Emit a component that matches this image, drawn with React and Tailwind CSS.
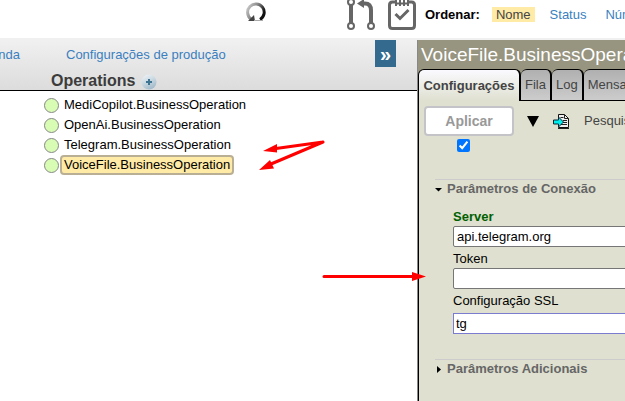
import React from "react";

const operations = [
  { name: "MediCopilot.BusinessOperation" },
  { name: "OpenAi.BusinessOperation" },
  { name: "Telegram.BusinessOperation" },
  { name: "VoiceFile.BusinessOperation", selected: true },
];

const tabs = ["Fila", "Log", "Mensagens"];

function RefreshIcon() {
  return (
    <svg width="22" height="22" viewBox="0 0 22 22" fill="none" aria-hidden="true">
      <defs>
        <linearGradient id="refresh" x1="0" y1="0" x2="1" y2="0.5">
          <stop offset="0" stopColor="#d0d0d0" />
          <stop offset="0.5" stopColor="#888" />
          <stop offset="1" stopColor="#111" />
        </linearGradient>
      </defs>
      <path d="M6 17A8.300 8.300 0 1 1 15 17.500" stroke="url(#refresh)" strokeWidth="3" />
      <path d="M3 19l6-6 1 6z" fill="#444" />
      <path d="M9 18.500h9" stroke="#aaa" strokeWidth="1" />
    </svg>
  );
}

function BranchIcon() {
  return (
    <svg width="28" height="31" viewBox="0 0 28 31" fill="none" stroke="#666" aria-hidden="true">
      <path d="M4 5v18" strokeWidth="4" />
      <path d="M15 3.500h3q6 0 6 7v13" strokeWidth="4" />
      <path d="M10 3.500L17-1V8z" fill="#666" strokeWidth="0" />
      <circle cx="4" cy="2" r="3" fill="#fff" strokeWidth="2" />
      <circle cx="4" cy="26" r="3" fill="#fff" strokeWidth="2" />
      <circle cx="24" cy="26" r="3" fill="#fff" strokeWidth="2" />
    </svg>
  );
}

function ChecklistIcon() {
  return (
    <svg width="28" height="31" viewBox="0 0 28 31" fill="none" stroke="#666" aria-hidden="true">
      <path d="M8 2H4.500Q1.500 2 1.500 5V25.500Q1.500 28.500 4.500 28.500H23.500Q26.500 28.500 26.500 25.500V5Q26.500 2 23.500 2H20" strokeWidth="3" />
      <path d="M7 3.500h14" strokeWidth="2" />
      <path d="M8 0v6M12 0v6M16 0v6M20 0v6" strokeWidth="2" />
      <path d="M7.500 14l4.500 4.500 8.500-8.500" strokeWidth="3" />
    </svg>
  );
}

function AddIcon() {
  return (
    <svg width="16" height="16" viewBox="0 0 16 16" aria-hidden="true">
      <defs>
        <linearGradient id="add" x1="0.2" y1="0" x2="0.7" y2="1">
          <stop offset="0" stopColor="#edf3f6" />
          <stop offset="1" stopColor="#9fb8c8" />
        </linearGradient>
      </defs>
      <circle cx="8" cy="8" r="7.500" fill="url(#add)" />
      <path d="M8 5v6M5 8h6" stroke="#3f7590" strokeWidth="2" />
    </svg>
  );
}

function ExportIcon() {
  return (
    <svg width="17" height="17" viewBox="0 0 17 17" aria-hidden="true">
      <path d="M5.500 1.500h6l4 4v9h-10z" fill="#eee" stroke="#111" />
      <path d="M11.500 1.500v4h4M7.500 4.500h3M10 7.500h4M10 9.500h4M8 11.500h6M5 15.500h11" fill="none" stroke="#222" />
      <path d="M.5 7h5v-3l5 5-5 5v-3h-5z" fill="#0ee" stroke="#123" />
    </svg>
  );
}

function Arrows() {
  return (
    <svg
      className="pointer-events-none absolute top-0 left-0"
      width="440"
      height="300"
      viewBox="0 0 440 300"
      stroke="#f00"
      fill="#f00"
      aria-hidden="true"
    >
      <path d="M323 142L276 148.500M323 142L271 164M324 276.500H414" strokeWidth="3" strokeLinecap="round" />
      <path d="M263 151l14-7v8.500zM259 170l11-10 4 8.500zM426 276.500l-14-4.500v9z" stroke="none" />
    </svg>
  );
}

function Section({ title, open, children }) {
  return (
    <section className="border-t border-[#ccc] pt-px">
      <h3>
        <button type="button" aria-expanded={open} className="flex h-4 items-center font-bold text-[#666]">
          <svg width="7" height="7" viewBox="0 0 7 7" className="mr-[5px]" aria-hidden="true">
            {open ? <path d="M0 2h7L3.500 5.500z" fill="#000" /> : <path d="M2 0v7l4-3.500z" fill="#000" />}
          </svg>
          {title}
        </button>
      </h3>
      {children}
    </section>
  );
}

function Field({ id, label, value, highlight, plain }) {
  return (
    <div>
      <label
        htmlFor={id}
        className={highlight ? "block pt-[3px] leading-[18px] font-bold text-[#006000]" : "block pt-[3px] leading-[18px]"}
      >
        {label}
      </label>
      <input
        id={id}
        type="text"
        defaultValue={value}
        className={
          plain
            ? "mt-[3px] block h-[21px] w-full border border-[#7b7bd0] bg-white px-[2px]"
            : "block h-[21px] w-full rounded-xs border border-[#767676] bg-white px-[3px]"
        }
      />
    </div>
  );
}

export default function App() {
  return (
    <div className="relative flex min-h-screen flex-col overflow-hidden bg-white font-['Liberation_Sans',Arial,sans-serif] text-[13px] whitespace-nowrap text-black">
      <header className="flex h-[38px] items-start justify-end">
        <button type="button" aria-label="Atualizar" className="mr-20 pt-[2px]">
          <RefreshIcon />
        </button>
        <button type="button" aria-label="Ramificações" className="mr-[13px]">
          <BranchIcon />
        </button>
        <button type="button" aria-label="Tarefas">
          <ChecklistIcon />
        </button>
        <nav className="flex w-[209px] items-center overflow-hidden pt-[7px] pl-[9px] leading-[15px]">
          <span className="mr-3 shrink-0 font-bold">Ordenar:</span>
          <a href="#nome" className="mr-[15px] shrink-0 bg-[#ffeaa6] px-1 text-[#444]">Nome</a>
          <a href="#status" className="mr-[19px] shrink-0 text-[#3a7fc0]">Status</a>
          <a href="#numero" className="shrink-0 text-[#3a7fc0]">Número</a>
        </nav>
      </header>

      <main className="flex flex-1 bg-[#f0f0f0]">
        <div className="flex min-w-0 flex-1 flex-col bg-white">
          <div className="h-[53px] border-b border-black bg-linear-to-b from-[#f1f1f1] to-[#dcdcdc]">
            <div className="flex h-[34px] items-start">
              <nav className="flex flex-1 gap-[46px] pt-[9px] leading-[15px] text-[#3a7fc0]">
                <a href="#legenda" className="flex w-5 justify-end">Legenda</a>
                <a href="#configuracoes">Configurações de produção</a>
              </nav>
              <button
                type="button"
                aria-label="Expandir"
                className="mt-[2px] mr-[21px] h-[27px] w-[21px] bg-[#346a8e] text-xl leading-[29px] font-bold text-white"
              >
                »
              </button>
            </div>
            <h2 className="flex items-center gap-[6px] pl-[51px] text-base leading-[18px] font-bold text-[#3c3c3c]">
              Operations
              <button type="button" aria-label="Adicionar" className="pt-[2px]">
                <AddIcon />
              </button>
            </h2>
          </div>
          <ul className="pt-1 pl-11">
            {operations.map((op) => (
              <li key={op.name} className="flex h-5 items-center">
                <span className="size-[15px] rounded-full border border-[#888] bg-[#d8fcb4]" />
                <button
                  type="button"
                  className={
                    op.selected
                      ? "ml-px h-5 rounded-sm border-2 border-[#b9af94] bg-[#ffeaa6] px-[2px] leading-4"
                      : "ml-px h-5 border-2 border-transparent px-[2px] leading-4"
                  }
                >
                  {op.name}
                </button>
              </li>
            ))}
          </ul>
        </div>

        <aside className="mt-[2px] flex w-[208px] shrink-0 flex-col overflow-hidden border-l border-[#888] bg-[#97947f]">
          <h1 className="h-[29px] pl-[3px] text-[19px] leading-[29px] text-white">VoiceFile.BusinessOperation</h1>
          <div className="flex h-8 items-start text-[#444]">
            <button
              type="button"
              className="h-8 w-[103px] shrink-0 rounded-t-md border-x-2 border-t border-l border-black bg-linear-to-b from-[#fafaff] to-[#dfe0d0] font-bold"
            >
              Configurações
            </button>
            {tabs.map((tab) => (
              <button
                key={tab}
                type="button"
                className="h-8 shrink-0 rounded-t-md border-t border-r-2 border-b border-black bg-linear-to-b from-[#b0b0b0] to-[#ccc] px-1"
              >
                {tab}
              </button>
            ))}
          </div>
          <div className="flex-1 border-l border-black bg-[#dfe0d0]">
            <div className="flex items-center pt-[5px] pl-[5px]">
              <button
                type="button"
                className="h-[30px] w-[90px] shrink-0 rounded-sm border-2 border-[#c4c4c8] bg-white text-sm font-bold text-[#999]"
              >
                Aplicar
              </button>
              <button type="button" aria-label="Opções" className="ml-[13px] shrink-0">
                <svg width="12" height="11" viewBox="0 0 12 11" aria-hidden="true">
                  <path d="M0 0h12L6 11z" fill="#000" />
                </svg>
              </button>
              <button type="button" aria-label="Exportar" className="ml-[14px] shrink-0">
                <ExportIcon />
              </button>
              <label htmlFor="search" className="ml-[14px] shrink-0 text-[#444]">Pesquisar</label>
            </div>
            <input
              id="search"
              type="checkbox"
              defaultChecked
              className="mt-[3px] ml-[38px] block size-[13px] accent-[#0075ff]"
            />
            <div className="-mr-2 pt-[27px] pl-4">
              <Section title="Parâmetros de Conexão" open>
                <div className="pt-2 pb-[25px] pl-[18px]">
                  <Field id="server" label="Server" value="api.telegram.org" highlight />
                  <Field id="token" label="Token" value="" />
                  <Field id="ssl" label="Configuração SSL" value="tg" plain />
                </div>
              </Section>
              <Section title="Parâmetros Adicionais" open={false} />
            </div>
          </div>
        </aside>
      </main>
      <Arrows />
    </div>
  );
}
